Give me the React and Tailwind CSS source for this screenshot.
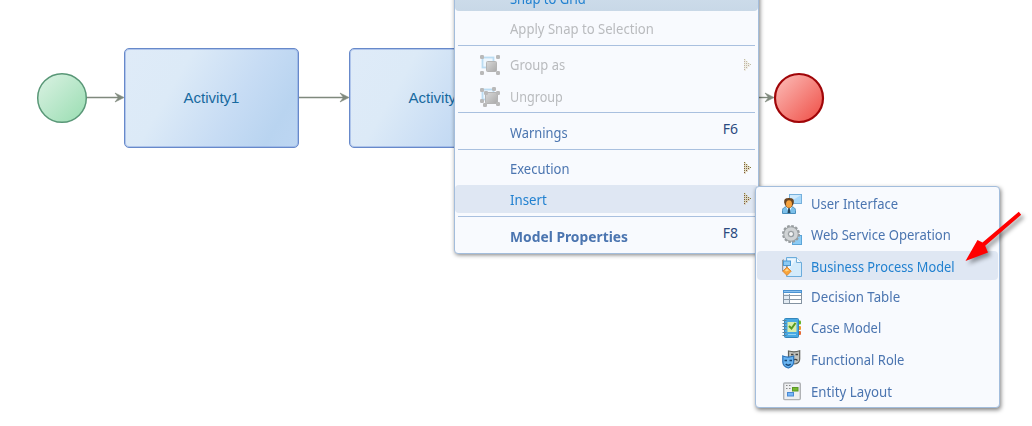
import React from "react";

const GripArrow = ({ faded }) => (
  <svg className={`absolute right-[6px] top-1/2 -mt-[7px] h-[13px] w-[9px] ${faded ? "opacity-45" : ""}`} viewBox="0 0 9 13" shapeRendering="crispEdges">
    <path d="M1 1h2v12H1zM3 3h2v8H3zM5 5h2v4H5z" fill="#d3c9a2" opacity=".6" />
    {[[1, 1], [1, 3], [1, 5], [1, 7], [1, 9], [1, 11], [3, 3], [3, 5], [3, 7], [3, 9], [5, 5], [5, 7], [7, 6]].map(([x, y], i) => (
      <rect key={i} x={x} y={y} width="1" height="1" fill={i % 2 ? "#7d4f3a" : "#857b3f"} />
    ))}
  </svg>
);

const GroupIcon = ({ ungroup }) => (
  <svg className="absolute left-[25px] top-1/2 -mt-[10px] h-5 w-5" viewBox="0 0 20 20">
    <defs>
      <linearGradient id="grey" x2="1" y2="1">
        <stop stopColor="#d9d9d9" />
        <stop offset="1" stopColor="#a9a9a9" />
      </linearGradient>
    </defs>
    <rect x="2.5" y="2.5" width="11" height="10" fill="#eef7fe" stroke="#bbdcf2" strokeWidth="1.8" />
    <rect x={ungroup ? 5.5 : 6.5} y={ungroup ? 5.5 : 6.5} width={ungroup ? 12 : 10} height={ungroup ? 11 : 10} rx="1" fill="url(#grey)" stroke="#b4b4b4" />
    {(ungroup
      ? [[0, 1], [12, 0], [16, 4], [4, 4], [0, 12], [3, 16], [16, 15]]
      : [[0, 0], [16, 0], [0, 16], [16, 16]]
    ).map(([x, y]) => (
      <rect key={`${x}-${y}`} x={x} y={y} width="4" height="4" rx="1.2" fill="#b9b9b9" />
    ))}
  </svg>
);

const Icon = ({ children }) => (
  <svg className="ml-[25px] mr-[9px] h-5 w-5 shrink-0" viewBox="0 0 20 20">{children}</svg>
);

const UserIcon = () => (
  <Icon>
    <rect x="7.5" y=".5" width="12" height="9" fill="#a8d8fa" stroke="#76b0dc" />
    <path d="M8 1h11L8 8z" fill="#d0eafc" />
    <path d="M.5 19.500v-3c0-3 3-4 6.500-4s6.500 1 6.500 4v3z" fill="#7cc0ea" stroke="#4a8ebc" />
    <path d="M4 13l3 5 3-5z" fill="#e8f7ff" />
    <path d="M6.300 14h1.400l.8 5h-3z" fill="#26465c" />
    <path d="M2.200 8.500C1.700 4.500 4.500 4 7 4s5.300.5 4.800 4.500c-.5 3.500-2.800 5.500-4.800 5.500S2.700 12 2.200 8.500z" fill="#6a4420" />
    <ellipse cx="7" cy="10" rx="3" ry="3.800" fill="#f6a23d" />
  </Icon>
);

const GearIcon = () => (
  <Icon>
    <rect x="10.500" y="10.500" width="9" height="9" fill="#8dccf5" stroke="#5ca5d8" />
    <circle cx="9" cy="9" r="7.900" fill="none" stroke="#989da0" strokeWidth="2.200" strokeDasharray="2.600 1.536" />
    <circle cx="9" cy="9" r="5.200" fill="none" stroke="#999ea1" strokeWidth="5" />
    <circle cx="9" cy="9" r="5" fill="none" stroke="#d0d3d5" strokeWidth="3.600" />
    <circle cx="9" cy="9" r="2.500" fill="#f4f5f6" stroke="#8b9194" />
  </Icon>
);

const ProcessIcon = () => (
  <Icon>
    <path d="M4.500.5h10l5 5v14h-15z" fill="#d3ebfb" stroke="#6bacdc" />
    <path d="M6 2h8l-8 12z" fill="#edf7fe" />
    <path d="M14.500.5v5h5" fill="#f5fbff" stroke="#75afd9" />
    <path d="M2 3H.7v11H2" fill="none" stroke="#888" />
    <rect x="1.500" y="4" width="7" height="4.500" fill="#8bcaf4" stroke="#4a9ad4" />
    <path d="M5 8.500V10" stroke="#777" />
    <path d="M5 10l4.200 4.200L5 18.400.8 14.200z" fill="#f8a437" stroke="#df8936" />
    <path d="M5 11.500l2 2-3 1-1-1z" fill="#ffd48b" />
  </Icon>
);

const TableIcon = () => (
  <Icon>
    <rect x="1.500" y="3.500" width="18" height="13" fill="#fff" stroke="#8493a2" />
    <rect x="1" y="3" width="19" height="3" fill="#4b93d3" />
    <rect x="2" y="4" width="17" height="1" fill="#8bc0ed" />
    <path d="M2 8.500h17M2 12.500h17M7.500 7v9" stroke="#8a99a8" />
    <path d="M2 7h5v1H2zM2 9h5v3H2zM2 13h5v3H2z" fill="#e2eaf2" />
  </Icon>
);

const CaseIcon = () => (
  <Icon>
    <rect x="16" y="2.500" width="3" height="4" rx="1" fill="#67b52c" />
    <rect x="16" y="8" width="3" height="4" rx="1" fill="#f29a2b" />
    <rect x="16" y="13" width="3" height="4" rx="1" fill="#e76b37" />
    <rect x="2.500" y=".5" width="14" height="19" rx="1" fill="#48a9e3" stroke="#3586bb" />
    <rect x="5.500" y="4" width="9" height="10" fill="#d9edab" />
    <path d="M7 8l2.500 2.500 4-5.500" fill="none" stroke="#579a20" strokeWidth="2" />
    <path d="M6 16.500h8" stroke="#94d3f5" />
    <path d="M.5 2.500h4M.5 5.500h4M.5 8.500h4M.5 11.500h4M.5 14.500h4M.5 17.500h4" stroke="#5b849d" strokeWidth="1" />
  </Icon>
);

const MasksIcon = () => (
  <Icon>
    <path d="M6.500 1c3.500 1 8 1 11.200-.3v8.300c0 3-2 4.500-5 5C9 13 6.500 11 6.500 8z" fill="#c3c3bd" stroke="#62635d" strokeWidth="1.200" />
    <path d="M9 4.500h2.500M13.500 4.500H16M11 10.500c1.500-1.500 3-1.500 4.500 0" fill="none" stroke="#444" strokeWidth="1.400" />
    <path d="M.8 6c3.500 1.400 7 1.400 10.900 0v6c0 3-2.200 5-5.400 6-3.300-1-5.500-3-5.500-6z" fill="#69b4f2" stroke="#2a72b8" strokeWidth="1.200" />
    <path d="M2.500 10.500H5M7.500 10.500H10M3.700 14c1.500 1.600 3.700 1.600 5 0" fill="none" stroke="#164574" strokeWidth="1.400" />
  </Icon>
);

const LayoutIcon = () => (
  <Icon>
    <rect x="1.700" y="1" width="16.600" height="16.600" rx="1" fill="#eeeff1" stroke="#b0b2b5" strokeWidth="1.400" />
    <path d="M4 3.500h1.500M7 3.500h1.500M4 6.500h1.500M7 6.500h1.500" stroke="#888" />
    <rect x="10.500" y="5.500" width="5.500" height="3.500" fill="#77b82f" stroke="#5b9826" />
    <rect x="5.500" y="10.500" width="6" height="3.500" fill="#77b7fa" stroke="#4a89d2" />
  </Icon>
);

const Separator = () => <div className="mx-[3px] h-px shrink-0 bg-[#a9c0df]" />;

const entries = [
  ["User Interface", UserIcon, 87.5],
  ["Web Service Operation", GearIcon, 140],
  ["Business Process Model", ProcessIcon, 143.5],
  ["Decision Table", TableIcon, 89],
  ["Case Model", CaseIcon, 70],
  ["Functional Role", MasksIcon, 93.5],
  ["Entity Layout", LayoutIcon, 80.5],
];

/* Squeezes or stretches a label to a fixed advance width. */
function Label({ text, width, className = "" }) {
  const ref = React.useRef(null);
  const [scale, setScale] = React.useState(1);
  React.useLayoutEffect(() => {
    setScale(width / ref.current.offsetWidth);
  }, [width]);
  return (
    <span ref={ref} className={`inline-block origin-left whitespace-nowrap ${className}`} style={{ transform: `scaleX(${scale})` }}>
      {text}
    </span>
  );
}

function MenuRow({ text, width, className, shortcut, children }) {
  return (
    <div className={`relative flex shrink-0 items-center pl-[55px] ${className}`}>
      {children}
      <Label text={text} width={width} />
      {shortcut && (
        <span className="absolute right-[20px] top-[6px] font-normal text-[#2b4a80]">
          <Label text={shortcut} width={15} />
        </span>
      )}
    </div>
  );
}

function Activity({ text, className }) {
  return (
    <div className={`absolute top-[48px] flex h-[100px] w-[175px] items-center justify-center rounded-[5px] border border-[#6789ca] bg-[linear-gradient(120deg,#dfebf8_0%,#dceaf7_30%,#c7dcf4_62%,#b9d4f0_85%,#bdd6f2_100%)] font-['Liberation_Sans',sans-serif] text-[#17699f] shadow-[inset_0_0_0_1px_rgba(130,160,222,0.5)] ${className}`}>
      <Label text={text} width={56} className="text-[15px]" />
    </div>
  );
}

export default function App() {
  return (
    <main className="relative h-[426px] w-[1032px] overflow-hidden bg-white font-['Noto_Sans',sans-serif] text-[14px] leading-5 text-[#4b75b0]">
      <svg className="absolute inset-0 h-full w-full" viewBox="0 0 1032 426">
        <defs>
          <linearGradient id="start" x2="1" y2="1">
            <stop offset=".1" stopColor="#d5f0df" />
            <stop offset=".9" stopColor="#9fdfb6" />
          </linearGradient>
          <linearGradient id="end" x2="1" y2="1">
            <stop offset=".1" stopColor="#fbb5b0" />
            <stop offset=".9" stopColor="#f0574f" />
          </linearGradient>
        </defs>
        {[[87, 124], [299, 349], [740, 774]].map(([a, b]) => (
          <g key={a}>
            <path d={`M${a} 97.500H${b - 3}`} stroke="#7f897d" strokeWidth="1.400" />
            <path d={`M${b} 97.500l-9-4.500 3.500 4.500-3.500 4.500z`} fill="#7f897d" stroke="#7f897d" strokeWidth=".6" />
          </g>
        ))}
        <circle cx="62" cy="98" r="24.300" fill="url(#start)" stroke="#599777" strokeWidth="1.500" />
        <circle cx="799" cy="98" r="24" fill="url(#end)" stroke="#a00508" strokeWidth="2.200" />
      </svg>
      <Activity text="Activity1" className="left-[124px]" />
      <Activity text="Activity2" className="left-[349px]" />

      <section className="absolute left-[454px] top-[-20px] flex h-[274px] w-[305px] flex-col rounded-[4px] border border-[#a3bddc] bg-[#f8fafe] shadow-[1px_1px_4px_rgba(0,0,0,0.5)]">
        <MenuRow text="Snap to Grid" width={76} className="h-[30px] rounded-b-[4px] bg-gradient-to-b from-[#d2e0ed] to-[#c8d8e7] pt-[5px] text-[#2181d0]" />
        <MenuRow text="Apply Snap to Selection" width={144} className="h-[34px] pt-[2px] text-[#b9bbbe]" />
        <Separator />
        <MenuRow text="Group as" width={55.5} className="mt-[3px] h-[32px] text-[#b9bbbe]">
          <GroupIcon />
          <GripArrow faded />
        </MenuRow>
        <MenuRow text="Ungroup" width={53} className="h-[31px] text-[#b9bbbe]">
          <GroupIcon ungroup />
        </MenuRow>
        <Separator />
        <MenuRow text="Warnings" width={58} shortcut="F6" className="h-[36px] pt-[3px]" />
        <Separator />
        <MenuRow text="Execution" width={59.5} className="h-[35px] pt-[3px]">
          <GripArrow />
        </MenuRow>
        <MenuRow text="Insert" width={37} className="h-[28px] rounded-[4px] bg-[#dfe7f3] pt-[1px] text-[#2181d0]">
          <GripArrow />
        </MenuRow>
        <div className="h-[3px] shrink-0" />
        <Separator />
        <MenuRow text="Model Properties" width={118.5} shortcut="F8" className="h-[36px] pt-[3px] font-bold" />
      </section>

      <section className="absolute left-[755px] top-[186px] flex h-[222px] w-[245px] flex-col rounded-[4px] border border-[#a3bddc] bg-[#f8fafe] px-px pt-px shadow-[1px_2px_4px_rgba(0,0,0,0.5)]">
        {entries.map(([text, Glyph, width], i) => (
          <div key={text} className={`flex shrink-0 items-center ${i === 5 ? "h-[32px]" : "h-[31.200px]"}`}>
            <div className={`flex h-[29px] w-full items-center rounded-[4px] ${i === 2 ? "bg-[#dfe7f3] pt-[1.500px] text-[#2181d0]" : ""}`}>
              <Glyph />
              <Label text={text} width={width} />
            </div>
          </div>
        ))}
      </section>

      <svg className="absolute inset-0 h-full w-full" viewBox="0 0 1032 426">
        <path d="M1018.800 211.700L982.500 242.500l-5-2.500L965.500 261l22.500-8.500-2.800-6.800 36-31z" className="fill-[#ff0000] drop-shadow-[3px_3px_2px_rgba(0,0,0,0.4)]" />
      </svg>
    </main>
  );
}
